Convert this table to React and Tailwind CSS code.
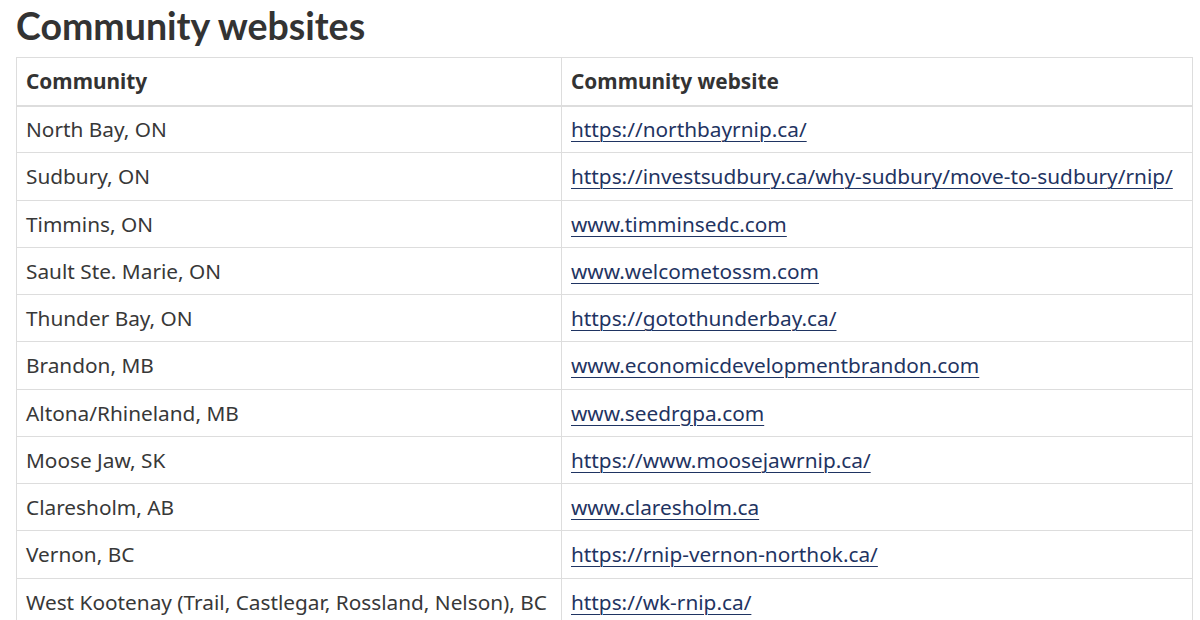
import React from "react";

const rows = [
  ["North Bay, ON", "https://northbayrnip.ca/"],
  ["Sudbury, ON", "https://investsudbury.ca/why-sudbury/move-to-sudbury/rnip/"],
  ["Timmins, ON", "www.timminsedc.com"],
  ["Sault Ste. Marie, ON", "www.welcometossm.com"],
  ["Thunder Bay, ON", "https://gotothunderbay.ca/"],
  ["Brandon, MB", "www.economicdevelopmentbrandon.com"],
  ["Altona/Rhineland, MB", "www.seedrgpa.com"],
  ["Moose Jaw, SK", "https://www.moosejawrnip.ca/"],
  ["Claresholm, AB", "www.claresholm.ca"],
  ["Vernon, BC", "https://rnip-vernon-northok.ca/"],
  ["West Kootenay (Trail, Castlegar, Rossland, Nelson), BC", "https://wk-rnip.ca/"],
];

const App = () => {
  return (
    <div className="bg-white w-[1200px] h-[620px] overflow-hidden pl-4 pr-2 font-['Noto_Sans',sans-serif] text-[#383838]">
      <h1 className="font-['Lato',sans-serif] font-bold text-[37.5px] leading-[52px] text-[#333]">
        Community websites
      </h1>
      <table className="w-[1177px] border-collapse border border-[#ddd] mt-[5px] text-[20.8px]">
        <thead>
          <tr className="h-[48px] border-b-2 border-[#ddd]">
            <th className="text-left font-bold pl-[9px] w-[545px] border-r border-[#ddd] text-[#333]">Community</th>
            <th className="text-left font-bold pl-[9px] text-[#333]">Community website</th>
          </tr>
        </thead>
        <tbody>
          {rows.map(([name, url]) => (
            <tr key={name} className="h-[47.25px] border-b border-[#ddd]">
              <td className="pl-[9px] border-r border-[#ddd] leading-[28px]">{name}</td>
              <td className="pl-[9px] leading-[28px] whitespace-nowrap">
                <a href="#" className="text-[#1f3462] underline decoration-1 underline-offset-[4px]">
                  {url}
                </a>
              </td>
            </tr>
          ))}
        </tbody>
      </table>
    </div>
  );
};

export default App;
